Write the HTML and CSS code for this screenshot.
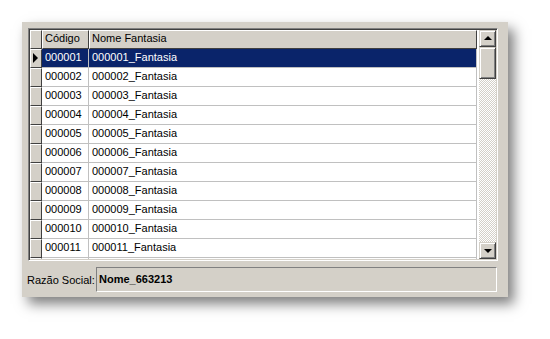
FILE: index.html
```html
<!DOCTYPE html>
<html>
<head>
<meta charset="utf-8">
<link rel="stylesheet" href="styles.css">
</head>
<body>
<div class="panel">
  <div class="grid">
    <div class="table">
      <div class="row head">
        <div class="ind"></div>
        <div class="c1">Código</div>
        <div class="c2">Nome Fantasia</div>
      </div>
      <div class="row sel"><div class="ind"><span class="tri"></span></div><div class="c1">000001</div><div class="c2">000001_Fantasia</div></div>
      <div class="row"><div class="ind"></div><div class="c1">000002</div><div class="c2">000002_Fantasia</div></div>
      <div class="row"><div class="ind"></div><div class="c1">000003</div><div class="c2">000003_Fantasia</div></div>
      <div class="row"><div class="ind"></div><div class="c1">000004</div><div class="c2">000004_Fantasia</div></div>
      <div class="row"><div class="ind"></div><div class="c1">000005</div><div class="c2">000005_Fantasia</div></div>
      <div class="row"><div class="ind"></div><div class="c1">000006</div><div class="c2">000006_Fantasia</div></div>
      <div class="row"><div class="ind"></div><div class="c1">000007</div><div class="c2">000007_Fantasia</div></div>
      <div class="row"><div class="ind"></div><div class="c1">000008</div><div class="c2">000008_Fantasia</div></div>
      <div class="row"><div class="ind"></div><div class="c1">000009</div><div class="c2">000009_Fantasia</div></div>
      <div class="row"><div class="ind"></div><div class="c1">000010</div><div class="c2">000010_Fantasia</div></div>
      <div class="row"><div class="ind"></div><div class="c1">000011</div><div class="c2">000011_Fantasia</div></div>
      <div class="row"><div class="ind"></div><div class="c1"></div><div class="c2"></div></div>
    </div>
    <div class="scroll">
      <div class="btn"><span class="up"></span></div>
      <div class="thumb"></div>
      <div class="track"></div>
      <div class="btn"><span class="down"></span></div>
    </div>
  </div>
  <div class="field">
    <span class="label">Razão Social:</span>
    <div class="edit">Nome_663213</div>
  </div>
</div>
</body>
</html>
```

FILE: styles.css
```css
html, body {
  margin: 0;
  padding: 0;
  background: #fff;
}
body {
  font-family: "Liberation Sans", Arial, sans-serif;
  font-size: 11px;
  color: #000;
  padding: 22px 0 0 22px;
  height: 339px;
  box-sizing: border-box;
  overflow: hidden;
}
.panel {
  width: 486px;
  height: 275px;
  background: #d4d0c8;
  box-sizing: border-box;
  padding: 6px 0 0 6px;
  box-shadow: 6px 7px 12px rgba(0,0,0,0.5);
  display: flex;
  flex-direction: column;
}
.grid {
  width: 470px;
  height: 233px;
  box-sizing: border-box;
  border-top: 1px solid #808080;
  border-left: 1px solid #808080;
  border-right: 1px solid #fff;
  border-bottom: 1px solid #fff;
  box-shadow: inset 1px 1px 0 #404040, inset -1px -1px 0 #d4d0c8;
  padding: 1px;
  display: flex;
  overflow: hidden;
  background: #fff;
}
.table {
  flex: 1;
  overflow: hidden;
  background: #fff;
}
.row {
  display: grid;
  grid-template-columns: 12px 47px 388px;
  height: 19px;
  box-sizing: border-box;
}
.row > div {
  box-sizing: border-box;
  border-right: 1px solid #c0c0c0;
  border-bottom: 1px solid #c0c0c0;
  line-height: 16px;
  padding-left: 3px;
  white-space: nowrap;
  overflow: hidden;
}
.row .ind {
  background: #d4d0c8;
  border-top: 1px solid #fff;
  border-left: 1px solid #fff;
  border-right: 1px solid #404040;
  border-bottom: 1px solid #404040;
  padding: 0;
  position: relative;
}
.head > div {
  background: #d4d0c8;
  border-top: 1px solid #fff;
  border-left: 1px solid #fff;
  border-right: 1px solid #404040;
  border-bottom: 1px solid #404040;
  line-height: 15px;
  padding-left: 2px;
}
.sel .c1, .sel .c2 {
  background: #0a246a;
  color: #fff;
}
.tri {
  position: absolute;
  left: 2px;
  top: 3px;
  width: 0;
  height: 0;
  border-top: 5px solid transparent;
  border-bottom: 5px solid transparent;
  border-left: 5px solid #000;
}
.scroll {
  width: 17px;
  display: flex;
  flex-direction: column;
  flex: none;
}
.btn, .thumb {
  background: #d4d0c8;
  box-sizing: border-box;
  border-top: 1px solid #d4d0c8;
  border-left: 1px solid #d4d0c8;
  border-right: 1px solid #404040;
  border-bottom: 1px solid #404040;
  box-shadow: inset 1px 1px 0 #fff, inset -1px -1px 0 #808080;
}
.btn {
  height: 17px;
  display: flex;
  align-items: center;
  justify-content: center;
}
.thumb {
  height: 32px;
}
.track {
  flex: 1;
  background-color: #fff;
  background-image:
    linear-gradient(45deg, #d4d0c8 25%, transparent 25%, transparent 75%, #d4d0c8 75%),
    linear-gradient(45deg, #d4d0c8 25%, transparent 25%, transparent 75%, #d4d0c8 75%);
  background-size: 2px 2px;
  background-position: 0 0, 1px 1px;
}
.up {
  width: 0;
  height: 0;
  border-left: 4px solid transparent;
  border-right: 4px solid transparent;
  border-bottom: 4px solid #000;
  margin-top: -1px;
}
.down {
  width: 0;
  height: 0;
  border-left: 4px solid transparent;
  border-right: 4px solid transparent;
  border-top: 4px solid #000;
}
.field {
  display: flex;
  align-items: center;
  margin-top: 6px;
  height: 25px;
}
.label {
  width: 69px;
  margin-left: -1px;
  color: #000;
}
.edit {
  width: 401px;
  height: 25px;
  box-sizing: border-box;
  border-top: 1px solid #808080;
  border-left: 1px solid #808080;
  border-right: 1px solid #fff;
  border-bottom: 1px solid #fff;
  font-weight: bold;
  line-height: 22px;
  padding-left: 2px;
}
```
